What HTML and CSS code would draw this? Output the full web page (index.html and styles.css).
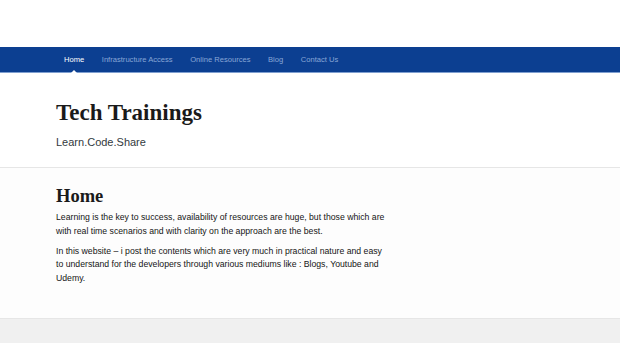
FILE: index.html
```html
<!DOCTYPE html>
<html>
<head>
<meta charset="utf-8">
<link rel="stylesheet" href="styles.css">
</head>
<body>
<div class="topspace"></div>
<nav class="nav">
  <ul class="menu">
    <li class="item active">Home</li>
    <li class="item">Infrastructure Access</li>
    <li class="item">Online Resources</li>
    <li class="item">Blog</li>
    <li class="item">Contact Us</li>
  </ul>
</nav>
<header class="header">
  <h1 class="title">Tech Trainings</h1>
  <p class="tagline">Learn.Code.Share</p>
</header>
<main class="content">
  <h2 class="page-title">Home</h2>
  <p class="para">Learning is the key to success, availability of resources are huge, but those which are with real time scenarios and with clarity on the approach are the best.</p>
  <p class="para">In this website – i post the contents which are very much in practical nature and easy to understand for the developers through various mediums like : Blogs, Youtube and Udemy.</p>
</main>
<footer class="footer"></footer>
</body>
</html>
```
FILE: styles.css
```css
html, body {
  margin: 0;
  padding: 0;
  background: #ffffff;
  font-family: "Liberation Sans", Arial, sans-serif;
}
.topspace {
  height: 47px;
  background: #ffffff;
}
.nav {
  height: 25px;
  background: #0c3f91;
  border-bottom: 1px solid #7f9fd0;
}
.menu {
  list-style: none;
  margin: 0;
  padding: 0 0 0 64px;
  display: flex;
  gap: 17.5px;
  height: 25px;
  align-items: center;
}
.item {
  font-size: 7.6px;
  color: #88a6d6;
  position: relative;
}
.item.active {
  color: #ffffff;
}
.item.active::after {
  content: "";
  position: absolute;
  left: 50%;
  bottom: -9px;
  margin-left: -3px;
  border-left: 3px solid transparent;
  border-right: 3px solid transparent;
  border-bottom: 3px solid #ffffff;
}
.header {
  height: 95px;
  padding: 0 56px;
  box-sizing: border-box;
  border-bottom: 1px solid #e6e6e6;
  box-shadow: 0 1px 2px rgba(0,0,0,0.05);
  display: flex;
  flex-direction: column;
  padding-top: 26px;
}
.title {
  margin: 0;
  font-family: "Liberation Serif", "Times New Roman", serif;
  font-weight: bold;
  font-size: 23px;
  line-height: 28px;
  color: #1a1a1a;
}
.tagline {
  margin: 8px 0 0;
  font-size: 11px;
  line-height: 14px;
  color: #333a40;
}
.content {
  height: 150px;
  padding: 17px 56px 0;
  box-sizing: border-box;
  background: #fdfdfd;
}
.page-title {
  margin: 0 0 4px;
  font-family: "Liberation Serif", "Times New Roman", serif;
  font-weight: bold;
  font-size: 18.5px;
  line-height: 22px;
  color: #1a1a1a;
}
.para {
  margin: 0 0 6.5px;
  font-size: 8.7px;
  line-height: 13.5px;
  color: #151515;
  max-width: 333px;
}
.footer {
  height: 24px;
  background: #f0f0f0;
  border-top: 1px solid #e6e6e6;
}
```
